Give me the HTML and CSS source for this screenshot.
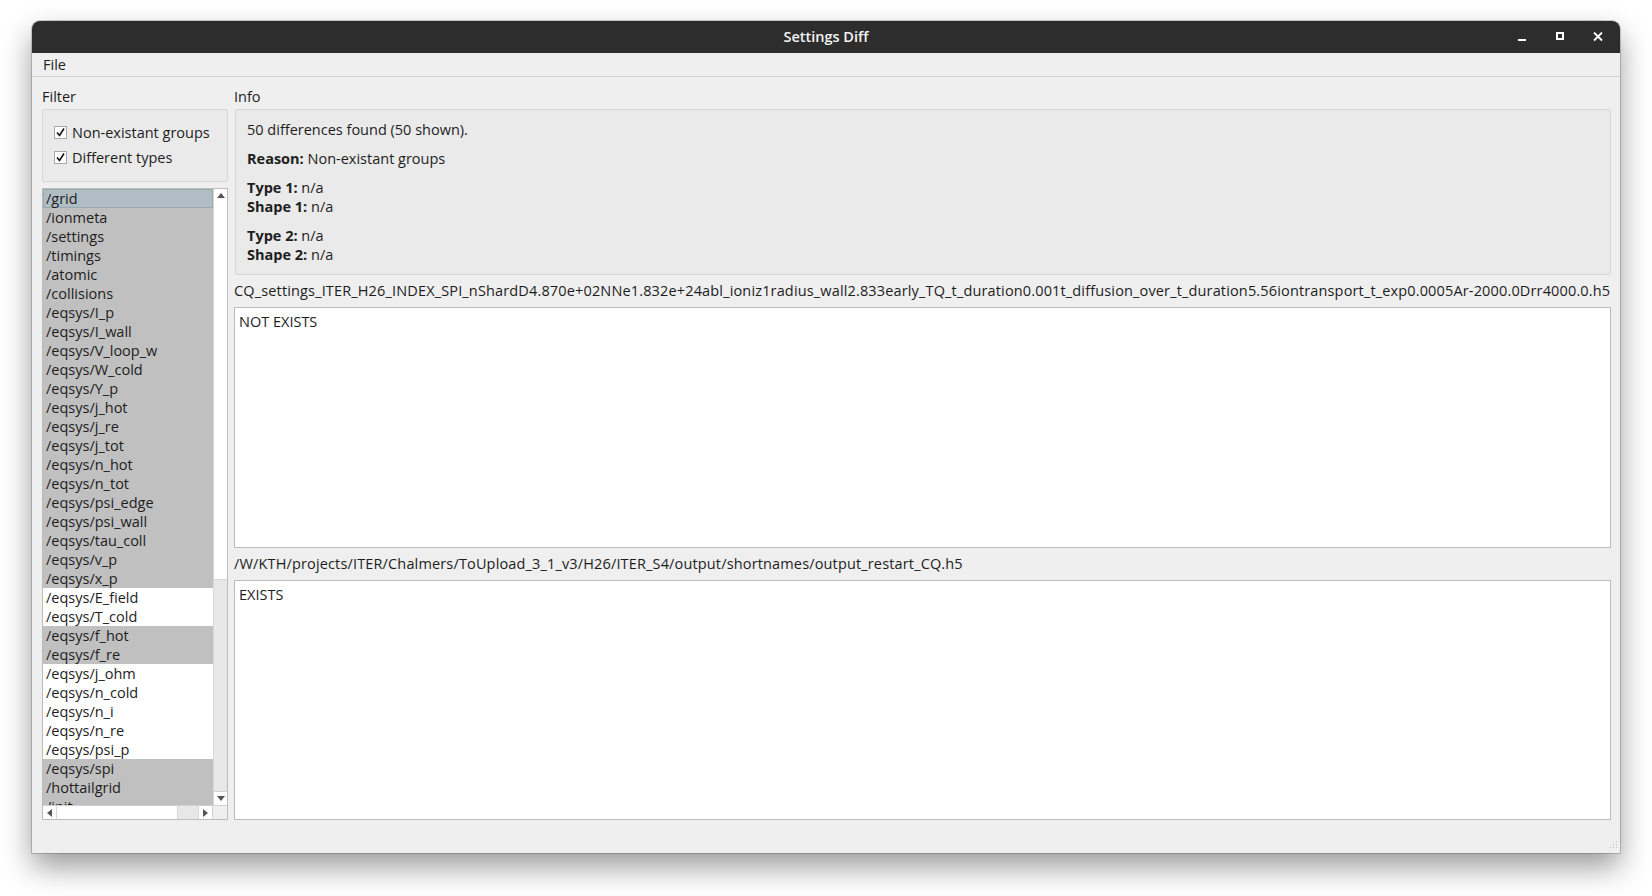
FILE: index.html
```html
<!DOCTYPE html>
<html lang="en">
  <head>
    <meta charset="UTF-8" />
    <title>Settings Diff</title>
    <link rel="stylesheet" href="styles.css">
  </head>
  <body>
    <div class="window">
      <div class="titlebar">
        <span></span>
        <span class="title">Settings Diff</span>
        <div class="controls">
          <span class="ctl"><svg width="10" height="10" viewBox="0 0 10 10"><rect x="1" y="7" width="8" height="2" fill="#fff"/></svg></span>
          <span class="ctl"><svg width="10" height="10" viewBox="0 0 10 10"><rect x="2" y="1" width="6" height="6" fill="none" stroke="#fff" stroke-width="2"/></svg></span>
          <span class="ctl"><svg width="10" height="10" viewBox="0 0 10 10"><path d="M1 0.5 L9 8.5 M9 0.5 L1 8.5" stroke="#fff" stroke-width="1.8"/></svg></span>
        </div>
      </div>
      <div class="menubar"><span class="menu-item">File</span></div>

      <div class="content">
        <div class="left">
          <div class="pane-label">Filter</div>
          <div class="filter-box">
            <label class="check">
              <span class="box"><svg width="11" height="11" viewBox="0 0 11 11"><path d="M2 5.5 L4.5 8.5 L9 1.5" fill="none" stroke="#111" stroke-width="1.6"/></svg></span>
              Non-existant groups
            </label>
            <label class="check">
              <span class="box"><svg width="11" height="11" viewBox="0 0 11 11"><path d="M2 5.5 L4.5 8.5 L9 1.5" fill="none" stroke="#111" stroke-width="1.6"/></svg></span>
              Different types
            </label>
          </div>

          <div class="list">
            <div class="list-view">
              <div class="list-items">
                <div class="row selected">/grid</div>
                <div class="row">/ionmeta</div>
                <div class="row">/settings</div>
                <div class="row">/timings</div>
                <div class="row">/atomic</div>
                <div class="row">/collisions</div>
                <div class="row">/eqsys/I_p</div>
                <div class="row">/eqsys/I_wall</div>
                <div class="row">/eqsys/V_loop_w</div>
                <div class="row">/eqsys/W_cold</div>
                <div class="row">/eqsys/Y_p</div>
                <div class="row">/eqsys/j_hot</div>
                <div class="row">/eqsys/j_re</div>
                <div class="row">/eqsys/j_tot</div>
                <div class="row">/eqsys/n_hot</div>
                <div class="row">/eqsys/n_tot</div>
                <div class="row">/eqsys/psi_edge</div>
                <div class="row">/eqsys/psi_wall</div>
                <div class="row">/eqsys/tau_coll</div>
                <div class="row">/eqsys/v_p</div>
                <div class="row">/eqsys/x_p</div>
                <div class="row plain">/eqsys/E_field</div>
                <div class="row plain">/eqsys/T_cold</div>
                <div class="row">/eqsys/f_hot</div>
                <div class="row">/eqsys/f_re</div>
                <div class="row plain">/eqsys/j_ohm</div>
                <div class="row plain">/eqsys/n_cold</div>
                <div class="row plain">/eqsys/n_i</div>
                <div class="row plain">/eqsys/n_re</div>
                <div class="row plain">/eqsys/psi_p</div>
                <div class="row">/eqsys/spi</div>
                <div class="row">/hottailgrid</div>
                <div class="row">/init</div>
              </div>
              <div class="vscroll">
                <span class="arrow"><svg width="8" height="5" viewBox="0 0 8 5"><path d="M0 5 L4 0 L8 5 Z" fill="#555"/></svg></span>
                <span class="v-thumb"></span>
                <span class="v-track"></span>
                <span class="arrow"><svg width="8" height="5" viewBox="0 0 8 5"><path d="M0 0 L4 5 L8 0 Z" fill="#555"/></svg></span>
              </div>
            </div>
            <div class="hscroll">
              <span class="harrow"><svg width="5" height="8" viewBox="0 0 5 8"><path d="M5 0 L0 4 L5 8 Z" fill="#555"/></svg></span>
              <span class="h-track"></span>
              <span class="h-thumb"></span>
              <span class="harrow"><svg width="5" height="8" viewBox="0 0 5 8"><path d="M0 0 L5 4 L0 8 Z" fill="#555"/></svg></span>
              <span class="corner"></span>
            </div>
          </div>
        </div>

        <div class="right">
          <div class="pane-label">Info</div>
          <div class="info-box">
            <p>50 differences found (50 shown).</p>
            <p><b>Reason:</b> Non-existant groups</p>
            <p><b>Type 1:</b> n/a<br><b>Shape 1:</b> n/a</p>
            <p><b>Type 2:</b> n/a<br><b>Shape 2:</b> n/a</p>
          </div>
          <div class="file-label">CQ_settings_ITER_H26_INDEX_SPI_nShardD4.870e+02NNe1.832e+24abl_ioniz1radius_wall2.833early_TQ_t_duration0.001t_diffusion_over_t_duration5.56iontransport_t_exp0.0005Ar-2000.0Drr4000.0.h5</div>
          <div class="text-box">NOT EXISTS</div>
          <div class="file-label">/W/KTH/projects/ITER/Chalmers/ToUpload_3_1_v3/H26/ITER_S4/output/shortnames/output_restart_CQ.h5</div>
          <div class="text-box">EXISTS</div>
        </div>
      </div>
      <span class="grip"><svg width="10" height="10" viewBox="0 0 10 10" fill="#bbb"><rect x="8" y="0" width="1" height="1"/><rect x="8" y="3" width="1" height="1"/><rect x="5" y="3" width="1" height="1"/><rect x="8" y="6" width="1" height="1"/><rect x="5" y="6" width="1" height="1"/><rect x="2" y="6" width="1" height="1"/></svg></span>
    </div>
  </body>
</html>
```

FILE: styles.css
```css
body {
  margin: 0;
  min-height: 896px;
  box-sizing: border-box;
  padding: 21px 0 0 32px;
  background: #ffffff;
  font-family: "Open Sans", "DejaVu Sans", sans-serif;
  font-size: 14.5px;
  color: #1d1d1d;
}
.window {
  position: relative;
  width: 1588px;
  height: 832px;
  display: flex;
  flex-direction: column;
  background: #efefef;
  border-radius: 8px 8px 0 0;
  box-shadow: 0 0 0 1px rgba(0, 0, 0, 0.18), 0 14px 30px rgba(0, 0, 0, 0.4);
}
.titlebar {
  height: 32px;
  flex: none;
  display: grid;
  grid-template-columns: 1fr auto 1fr;
  align-items: center;
  background: #2d2d2d;
  border-radius: 8px 8px 0 0;
}
.title {
  color: #f4f4f4;
  font-weight: 600;
  font-size: 14.5px;
  padding-bottom: 1px;
}
.controls {
  justify-self: end;
  display: flex;
  padding-right: 3px;
}
.ctl {
  width: 38px;
  height: 32px;
  display: flex;
  align-items: center;
  justify-content: center;
}
.menubar {
  height: 23px;
  flex: none;
  display: flex;
  align-items: center;
  border-bottom: 1px solid #d4d4d4;
}
.menu-item {
  padding-left: 11px;
}
.content {
  flex: 1;
  display: flex;
  gap: 6px;
  padding: 8px 9px 33px 10px;
  min-height: 0;
}
.left {
  width: 186px;
  display: flex;
  flex-direction: column;
}
.right {
  flex: 1;
  display: flex;
  flex-direction: column;
  min-width: 0;
}
.pane-label {
  height: 24px;
  line-height: 24px;
  flex: none;
}
.filter-box {
  height: 73px;
  box-sizing: border-box;
  border: 1px solid #d6d6d6;
  border-radius: 2px;
  background: #eaeaea;
  padding: 12px 0 0 11px;
  display: flex;
  flex-direction: column;
  gap: 5px;
}
.check {
  height: 20px;
  display: flex;
  align-items: center;
  gap: 5px;
}
.check .box {
  width: 13px;
  height: 13px;
  box-sizing: border-box;
  border: 1px solid #a8a8a8;
  background: #ffffff;
  display: flex;
  align-items: center;
  justify-content: center;
}
.list {
  margin-top: 6px;
  flex: 1;
  display: flex;
  flex-direction: column;
  border: 1px solid #bcbcbc;
  background: #ffffff;
  min-height: 0;
}
.list-view {
  flex: 1;
  display: flex;
  min-height: 0;
}
.list-items {
  flex: 1;
  overflow: hidden;
}
.row {
  height: 19px;
  line-height: 19px;
  padding-left: 3px;
  background: #c0c0c0;
  white-space: nowrap;
}
.row.plain {
  background: #ffffff;
}
.row.selected {
  box-sizing: border-box;
  background: #b1bdc5;
  border: 1px solid #9aa8b2;
  padding-left: 2px;
  line-height: 17px;
}
.vscroll {
  width: 14px;
  display: flex;
  flex-direction: column;
  border-left: 1px solid #d8d8d8;
  box-sizing: border-box;
}
.arrow {
  height: 13px;
  flex: none;
  display: flex;
  align-items: center;
  justify-content: center;
  background: #ffffff;
}
.v-thumb {
  height: 377px;
  flex: none;
  background: #ffffff;
}
.v-track {
  flex: 1;
  background: #e7e7e7;
  border-top: 1px solid #d8d8d8;
  border-bottom: 1px solid #d0d0d0;
}
.hscroll {
  height: 13px;
  flex: none;
  display: flex;
  border-top: 1px solid #d0d0d0;
  background: #ffffff;
}
.harrow {
  width: 13px;
  display: flex;
  align-items: center;
  justify-content: center;
}
.harrow:first-child {
  border-right: 1px solid #d8d8d8;
}
.h-track {
  flex: 1;
}
.h-thumb {
  width: 20px;
  background: #e7e7e7;
  border-left: 1px solid #d8d8d8;
  border-right: 1px solid #d8d8d8;
}
.corner {
  width: 14px;
  border-left: 1px solid #d0d0d0;
  background: #efefef;
}
.info-box {
  margin-left: 1px;
  height: 166px;
  box-sizing: border-box;
  flex: none;
  border: 1px solid #d6d6d6;
  border-radius: 2px;
  background: #eaeaea;
  padding: 10px 11px;
}
.info-box p {
  margin: 0 0 10px;
  line-height: 19px;
}
.file-label {
  height: 32px;
  line-height: 32px;
  flex: none;
  white-space: nowrap;
  letter-spacing: 0.15px;
}
.text-box {
  flex: 1;
  border: 1px solid #bcbcbc;
  background: #ffffff;
  padding: 4px 4px;
  line-height: 19px;
}
.grip {
  position: absolute;
  right: 2px;
  bottom: 2px;
  display: flex;
}
```
